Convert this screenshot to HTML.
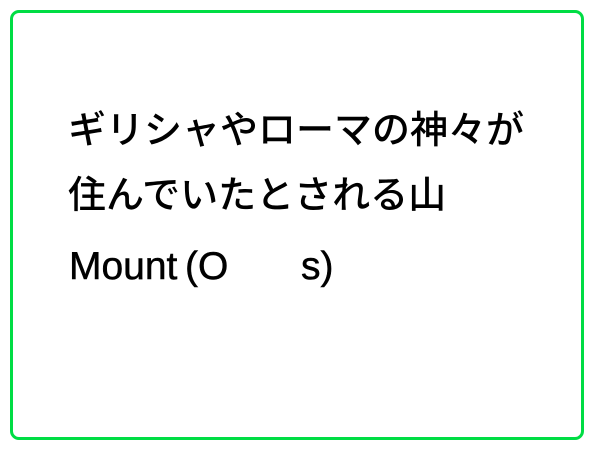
<!DOCTYPE html>
<html><head><meta charset="utf-8"><style>
html,body{margin:0;padding:0;background:#fff;width:600px;height:450px;overflow:hidden;position:relative}
.box{position:absolute;left:10px;top:10px;width:568px;height:424px;border:3px solid #00dd44;border-radius:9px}
.j{position:absolute;left:68px;font-family:"Noto Sans CJK JP","IPAGothic",sans-serif;font-size:38px;line-height:38px;letter-spacing:0px;font-weight:500;color:#000;white-space:nowrap}
.l{position:absolute;font-family:"Liberation Sans",sans-serif;font-size:39px;line-height:39px;color:#000;white-space:nowrap;-webkit-text-stroke:0.5px #000}
</style></head><body>
<div class="box"></div>
<div class="j" style="top:108px">ギリシャやローマの神々が</div>
<div class="j" style="top:173px">住んでいたとされる山</div>
<div class="l" style="left:69px;top:247px">Mount</div>
<div class="l" style="left:185px;top:247px">(O</div>
<div class="l" style="left:301px;top:247px">s)</div>
</body></html>
